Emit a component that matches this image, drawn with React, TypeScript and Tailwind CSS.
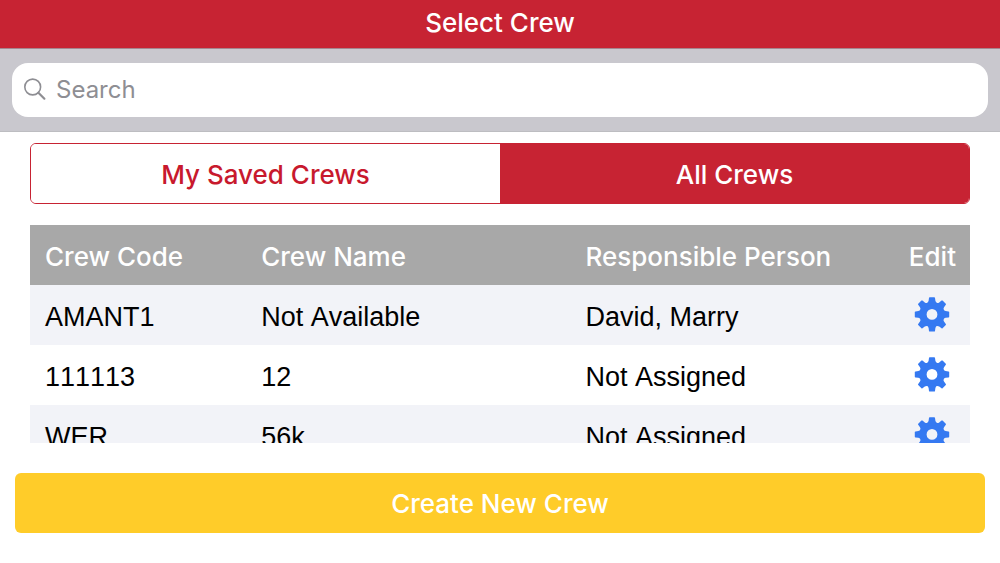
'use client';

import { useState } from 'react';

interface Crew {
  code: string;
  name: string;
  person: string;
}

const CREWS: Crew[] = [
  { code: 'AMANT1', name: 'Not Available', person: 'David, Marry' },
  { code: '111113', name: '12', person: 'Not Assigned' },
  { code: 'WER', name: '56k', person: 'Not Assigned' },
];

const TEETH = [0, 45, 90, 135, 180, 225, 270, 315];

function GearIcon() {
  return (
    <svg viewBox="-18 -18 36 36" className="size-9" aria-hidden="true">
      <circle cy="-0.6" r="8.8" fill="none" stroke="currentColor" strokeWidth="6.8" />
      {TEETH.map((angle) => (
        <path
          key={angle}
          transform={`translate(0 -0.6) rotate(${angle})`}
          fill="currentColor"
          d="M-2.3-17.2H2.3Q2.9-17.2 3-16.5L3.4-13.6Q3.6-12.4 5.2-11.2L4-9H-4L-5.2-11.2Q-3.6-12.4-3.4-13.6L-3-16.5Q-2.9-17.2-2.3-17.2Z"
        />
      ))}
    </svg>
  );
}

function SearchIcon() {
  return (
    <svg viewBox="0 0 24 24" className="size-6 shrink-0 text-[#8e8e93]" fill="none" stroke="currentColor" aria-hidden="true">
      <circle cx="8.7" cy="9" r="7.9" strokeWidth="1.6" />
      <path d="M14.4 14.7L20.4 20.7" strokeWidth="2.2" strokeLinecap="round" />
    </svg>
  );
}

export default function App() {
  const [tab, setTab] = useState<'saved' | 'all'>('all');
  const [query, setQuery] = useState('');

  const getTabColor = (active: boolean) =>
    active ? 'bg-[#c72333] text-white' : 'bg-white text-[#c8192d]';

  return (
    <div className="min-h-screen bg-white font-['Inter','Liberation_Sans',sans-serif] text-[26px] leading-8">
      {/* Title bar */}
      <header className="bg-[#c72333] pt-[7px] pb-[9px] text-center text-white">
        <h1 className="font-medium">Select Crew</h1>
      </header>

      {/* Search */}
      <div className="border-t border-b border-t-[#a5868f] border-b-[#bdbdc1] bg-[#c9c8ce] px-3 py-3.5">
        <label className="flex h-[54px] items-center gap-2 rounded-2xl bg-white px-3">
          <SearchIcon />
          <input
            type="text"
            aria-label="Search"
            placeholder="Search"
            value={query}
            onChange={(e) => setQuery(e.target.value)}
            className="min-w-0 flex-1 bg-transparent text-2xl outline-none placeholder:text-[#8e8e93]"
          />
        </label>
      </div>

      <main>
        <div className="px-[30px] pt-[11px]">
          {/* Saved / all switch */}
          <div className="grid h-[61px] grid-cols-2 overflow-hidden rounded-md border border-[#c72333] font-medium">
            <button type="button" onClick={() => setTab('saved')} className={`pt-[3px] ${getTabColor(tab === 'saved')}`}>
              My Saved Crews
            </button>
            <button type="button" onClick={() => setTab('all')} className={`pt-[3px] ${getTabColor(tab === 'all')}`}>
              All Crews
            </button>
          </div>

          {/* Crew list, the last row runs under the bottom edge */}
          <div className="mt-[21px] h-[218px] overflow-hidden">
            <table className="w-full table-fixed text-left">
              <thead className="bg-[#a8a8a8] text-white">
                <tr className="h-[60px]">
                  <th className="w-[23%] pt-[3px] pl-[15px] font-medium">Crew Code</th>
                  <th className="pt-[3px] pl-[15px] font-medium">Crew Name</th>
                  <th className="pt-[3px] pl-[15px] font-medium">Responsible Person</th>
                  <th className="w-[8%] pt-[3px] text-center font-medium">Edit</th>
                </tr>
              </thead>
              <tbody className="font-['Liberation_Sans',Arial,sans-serif] text-[27px] text-black [font-kerning:none]">
                {CREWS.map((crew) => (
                  <tr key={crew.code} className="h-[60px] odd:bg-[#f2f3f8]">
                    <td className="pt-[3px] pl-[15px]">{crew.code}</td>
                    <td className="pt-[3px] pl-[15px]">{crew.name}</td>
                    <td className="pt-[3px] pl-[15px]">{crew.person}</td>
                    <td className="text-center">
                      <button type="button" aria-label={`Edit ${crew.code}`} className="mx-auto block text-[#3579f1]">
                        <GearIcon />
                      </button>
                    </td>
                  </tr>
                ))}
              </tbody>
            </table>
          </div>
        </div>

        <div className="px-[15px] pt-[30px]">
          <button type="button" className="h-[60px] w-full rounded-md bg-[#ffcc29] pt-0.5 font-medium text-white">
            Create New Crew
          </button>
        </div>
      </main>
    </div>
  );
}
